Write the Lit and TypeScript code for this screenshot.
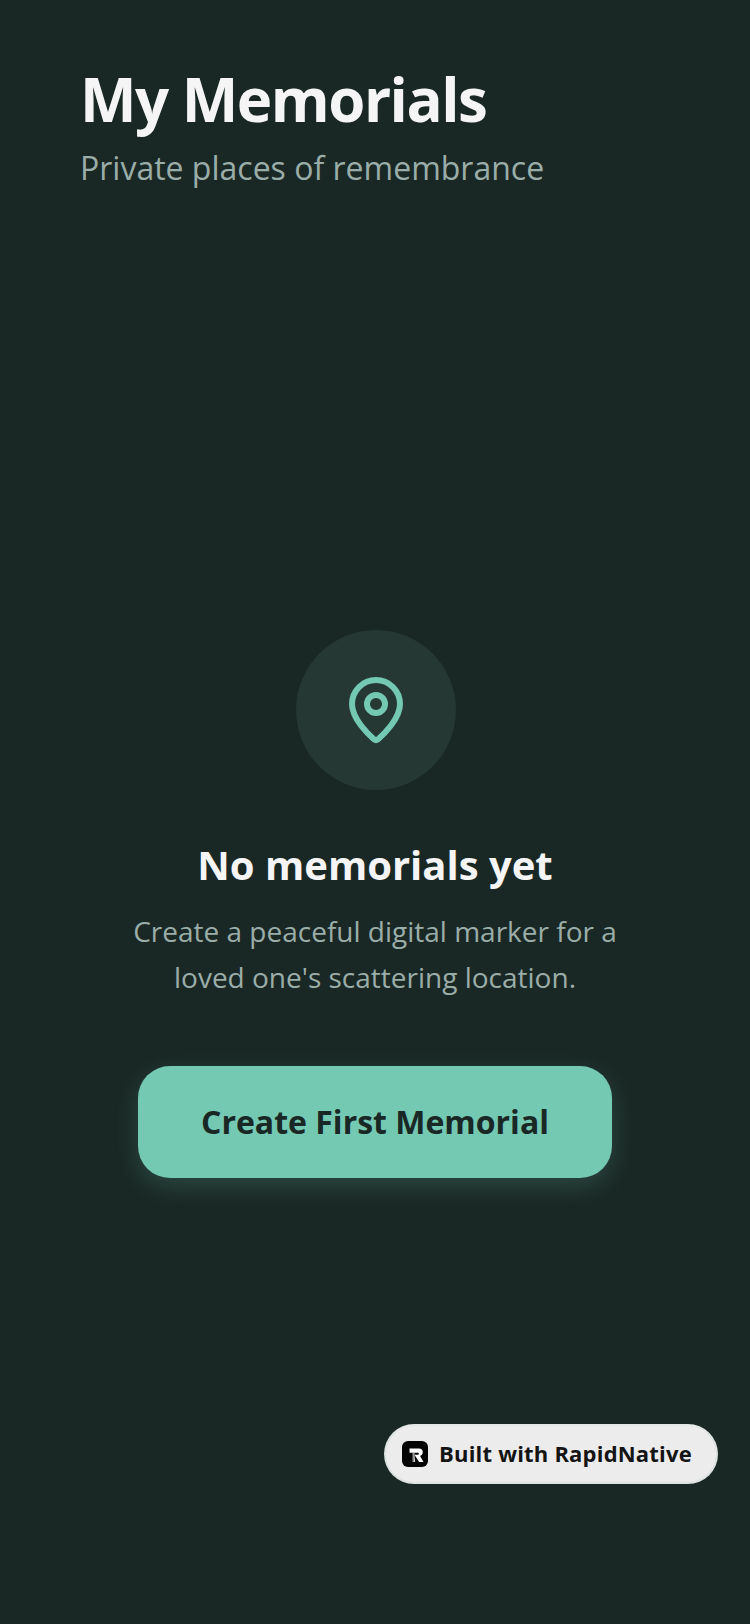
import { LitElement, html, css } from "lit";
import { customElement } from "lit/decorators.js";

@customElement("app-root")
export class AppRoot extends LitElement {
  static styles = css`
    :host { display: block; }
    .page {
      position: relative; width: 750px; height: 1624px; background: #1a2825;
      font-family: "Open Sans", sans-serif; display: flex; flex-direction: column;
      box-sizing: border-box;
    }
    .head { padding: 63px 80px 0; }
    h1 { margin: 0; font-size: 60px; line-height: 72px; font-weight: 700; color: #f5f5f6; letter-spacing: -1.5px; }
    .sub { font-size: 32px; line-height: 44px; color: #9bada8; margin-top: 11px; }
    .empty { flex: 1; display: flex; flex-direction: column; align-items: center; padding-top: 440px; }
    .circle { width: 160px; height: 160px; border-radius: 50%; background: #253833; display: flex; align-items: center; justify-content: center; margin-left: 2px; }
    h2 { margin: 47px 0 0; font-size: 40px; line-height: 56px; font-weight: 700; color: #f5f5f6; }
    .desc { margin-top: 15px; font-size: 28px; line-height: 46px; color: #9bada8; text-align: center; width: 560px; }
    .btn { margin-top: 66px; width: 474px; height: 112px; box-sizing: border-box; padding-bottom: 2px; border-radius: 32px; background: #74c9b3; color: #1a2825; font-size: 32px; font-weight: 700; display: flex; align-items: center; justify-content: center; box-shadow: 0 8px 24px rgba(116,201,179,.2); }
    .badge { position: absolute; left: 384px; top: 1424px; width: 334px; height: 60px; box-sizing: border-box; border-radius: 30px; background: #ececec; border: 2px solid #dce3e1; border-top-color: #e4e8e7; display: flex; align-items: center; gap: 11px; padding: 0 0 2px 16px; font-size: 22px; letter-spacing: 0.2px; font-weight: 700; color: #141414; }
    .logo { flex: none; margin-top: 2px; }
  `;
  render() {
    return html`<div class="page">
      <div class="head"><h1>My Memorials</h1><div class="sub">Private places of remembrance</div></div>
      <div class="empty">
        <div class="circle">
          <svg width="72" height="72" viewBox="0 0 24 24" fill="none" stroke="#74c9b3" stroke-width="2" stroke-linecap="round" stroke-linejoin="round"><path d="M20 10c0 4.993-5.539 10.193-7.399 11.799a1 1 0 0 1-1.202 0C9.539 20.193 4 14.993 4 10a8 8 0 0 1 16 0"/><circle cx="12" cy="10" r="3"/></svg>
        </div>
        <h2>No memorials yet</h2>
        <div class="desc">Create a peaceful digital marker for a loved one's scattering location.</div>
        <div class="btn">Create First Memorial</div>
      </div>
      <div class="badge">
        <svg class="logo" width="26" height="26" viewBox="0 0 26 26">
          <defs><linearGradient id="rg" x1="0" y1="0" x2="1" y2="0"><stop offset="0" stop-color="#fff" stop-opacity="0.15"/><stop offset="1" stop-color="#fff"/></linearGradient></defs>
          <rect width="26" height="26" rx="6" fill="#050505"/>
          <path d="M7.5 7.5H17c2.4 0 3.8 1.5 3.8 3.6 0 1.9-1 3.2-2.7 3.8L21.5 21h-4.4l-4.6-7.2h3.2c.7 0 1.1-.4 1.1-1s-.4-1-1.1-1H7.5Z" fill="#fff"/>
          <path d="M10 11.8h2.5V14l.6 7H10Z" fill="url(#rg)"/>
        </svg>
        Built with RapidNative
      </div>
    </div>`;
  }
}
